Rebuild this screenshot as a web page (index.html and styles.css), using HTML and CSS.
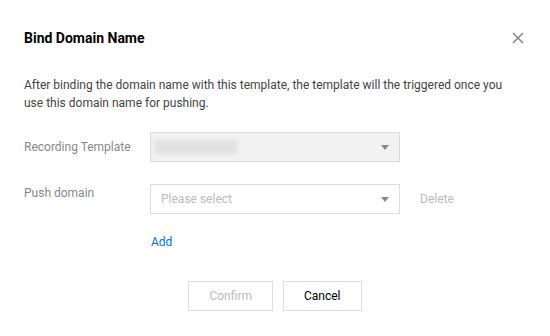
FILE: index.html
```html
<!DOCTYPE html>
<html lang="en">
  <head>
    <meta charset="UTF-8" />
    <meta name="viewport" content="width=device-width, initial-scale=1.0" />
    <title>Bind Domain Name</title>
    <link rel="stylesheet" href="styles.css">
  </head>
  <body>
    <div class="dialog">
      <div class="dialog-header">
        <h1>Bind Domain Name</h1>
        <button type="button" class="close-button" aria-label="Close">
          <svg width="12" height="12" viewBox="0 0 12 12">
            <path d="M1 1 L11 11 M11 1 L1 11" stroke="#888" stroke-width="1.6" fill="none" />
          </svg>
        </button>
      </div>

      <p class="desc">
        After binding the domain name with this template, the template will the triggered once you
        use this domain name for pushing.
      </p>

      <form id="bindDomainForm">
        <div class="form-row">
          <label>Recording Template</label>
          <div class="select disabled">
            <span class="blurred"></span>
            <span class="arrow"></span>
          </div>
        </div>

        <div class="form-row">
          <label>Push domain</label>
          <div class="select">
            <span class="placeholder">Please select</span>
            <span class="arrow"></span>
          </div>
          <span class="delete-link">Delete</span>
        </div>

        <div class="add-row">
          <a href="#" class="add-link">Add</a>
        </div>

        <div class="dialog-footer">
          <button type="button" class="btn" disabled>Confirm</button>
          <button type="button" class="btn">Cancel</button>
        </div>
      </form>
    </div>
  </body>
</html>
```

FILE: styles.css
```css
body {
  margin: 0;
  background-color: #fff;
  font-family: Roboto, "Liberation Sans", Arial, sans-serif;
  font-size: 12px;
  color: #444;
}
.dialog {
  width: 550px;
  height: 336px;
  box-sizing: border-box;
  padding: 28px 24px 0 24px;
}
.dialog-header {
  display: flex;
  justify-content: space-between;
  align-items: center;
  height: 20px;
}
h1 {
  margin: 0;
  font-size: 14px;
  font-weight: bold;
  color: #000;
}
.close-button {
  background: none;
  border: none;
  padding: 0;
  margin-right: 2px;
  width: 12px;
  height: 12px;
  cursor: pointer;
  display: flex;
}
.desc {
  margin: 28px 0 0 0;
  line-height: 18px;
  color: #444;
  width: 490px;
}
.form-row {
  display: flex;
  align-items: flex-start;
  margin-top: 20px;
}
.form-row + .form-row {
  margin-top: 22px;
}
label {
  width: 126px;
  flex-shrink: 0;
  color: #888;
  line-height: 30px;
}
.form-row:nth-child(2) label {
  margin-top: -6px;
}
.select {
  position: relative;
  width: 250px;
  height: 30px;
  box-sizing: border-box;
  border: 1px solid #ddd;
  display: flex;
  align-items: center;
  padding-left: 10px;
}
.select.disabled {
  background-color: #f2f2f2;
}
.placeholder {
  color: #bbb;
}
.blurred {
  width: 82px;
  height: 14px;
  margin-left: -6px;
  background-color: #e0e0e0;
  filter: blur(2px);
}
.arrow {
  position: absolute;
  right: 10px;
  top: 12px;
  width: 0;
  height: 0;
  border-left: 4px solid transparent;
  border-right: 4px solid transparent;
  border-top: 5px solid #888;
}
.delete-link {
  margin-left: 20px;
  line-height: 30px;
  color: #bbb;
}
.add-row {
  padding-left: 127px;
  margin-top: 21px;
}
.add-link {
  color: #006eff;
  text-decoration: none;
}
.dialog-footer {
  display: flex;
  justify-content: center;
  gap: 10px;
  margin-top: 32px;
}
.btn {
  min-width: 64px;
  height: 30px;
  padding: 0 20px;
  background-color: #fff;
  border: 1px solid #ddd;
  font-family: inherit;
  font-size: 12px;
  color: #000;
  cursor: pointer;
}
.btn:disabled {
  color: #bbb;
  cursor: default;
}
```
